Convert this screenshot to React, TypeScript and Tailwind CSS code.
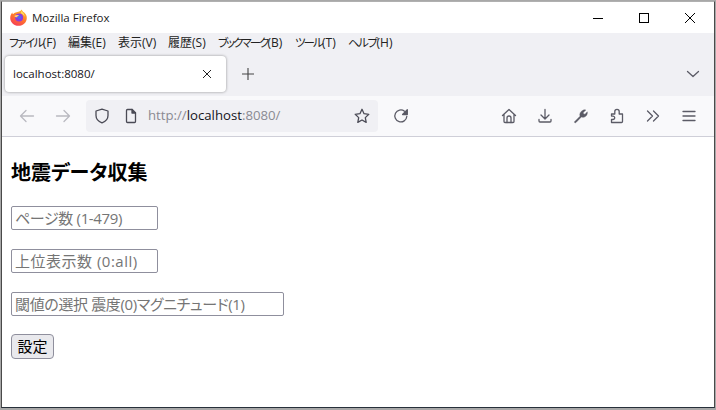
const UI_FONT = "font-['Open_Sans','Noto_Sans_CJK_JP',sans-serif]";

function Icon({ children, className = "" }: { children: React.ReactNode; className?: string }) {
  return (
    <svg
      viewBox="0 0 16 16"
      fill="none"
      stroke="currentColor"
      strokeWidth="1.3"
      strokeLinecap="round"
      strokeLinejoin="round"
      className={"h-4 w-4 shrink-0 " + className}
    >
      {children}
    </svg>
  );
}

function FirefoxLogo() {
  return (
    <svg viewBox="0 0 16 16" className="h-[17px] w-[17px] shrink-0">
      <defs>
        <linearGradient id="ffBody" x1="0.7" y1="0" x2="0.2" y2="1">
          <stop offset="0" stopColor="#ffc02e" />
          <stop offset="0.45" stopColor="#ff7a2b" />
          <stop offset="1" stopColor="#f5385a" />
        </linearGradient>
      </defs>
      <path
        d="M11 0.4c.5 1.6 1.2 2 2.4 3 1.6 1.500 2.400 3.100 2.400 5 0 4.200-3.400 7.400-7.800 7.400S.2 12.400.200 8.400C.2 6.400.9 4.600 2.200 3.200c0 .8.200 1.300.6 1.800.6-1 1.500-1.500 2.600-1.800C7.500 2.600 10 2.300 11 .4z"
        fill="url(#ffBody)"
      />
      <circle cx="8.600" cy="8" r="3.700" fill="#8a3be0" />
      <circle cx="8.800" cy="7.800" r="1.800" fill="#4f6af0" />
      <path d="M4 6.600c1.400-1 3.200-1.200 4.600-.6C7.200 6.300 6.700 7 6.800 7.800 5.600 8 4.600 7.500 4 6.600z" fill="#ffd76a" />
      <path d="M10.400 1.800c1.900 1.300 3.300 3.200 3.500 5.600-.8-1.600-2-2.800-3.700-3.400.4-.6.400-1.500.2-2.200z" fill="#ffe26b" />
    </svg>
  );
}

function ToolButton({ children, className = "" }: { children: React.ReactNode; className?: string }) {
  return <div className={"flex h-8 w-8 items-center justify-center " + className}>{children}</div>;
}

const MENU = [
  { name: "ファイル", key: "(F)", box: "w-[59px]", kana: "text-[11.500px] tracking-[-1.500px]" },
  { name: "編集", key: "(E)", box: "w-[50px]", kana: "" },
  { name: "表示", key: "(V)", box: "w-[50px]", kana: "" },
  { name: "履歴", key: "(S)", box: "w-[50px]", kana: "" },
  { name: "ブックマーク", key: "(B)", box: "w-[77px]", kana: "text-[11.500px] tracking-[-2px]" },
  { name: "ツール", key: "(T)", box: "w-[53px]", kana: "text-[11.500px] tracking-[-1.900px]" },
  { name: "ヘルプ", key: "(H)", box: "", kana: "text-[11.500px] tracking-[-1.500px]" },
];

const INPUT =
  "h-[24px] rounded-[2px] border border-[#8f8f9d] px-[3px] text-[15px] outline-none [font-feature-settings:'palt'] placeholder:text-[#757575]";

export default function App() {
  return (
    <div className="h-[410px] w-[716px] overflow-hidden border-t border-x border-b-2 border-[#a8a8a8] bg-white">
      <div className={"flex h-full flex-col border-t border-x border-b border-t-[#b0b0b0] border-x-[#4a4a4a] border-b-[#27303a] " + UI_FONT}>
        {/* title bar */}
        <div className="flex h-[31px] shrink-0 items-center bg-white pl-[8px] text-[11.500px] text-[#222]">
          <FirefoxLogo />
          <span className="ml-[5px]">Mozilla Firefox</span>
          <div className="ml-auto mr-px flex items-center text-black">
            <svg viewBox="0 0 46 30" className="h-[30px] w-[46px]" fill="none" stroke="currentColor">
              <path d="M18 15.500h10" />
            </svg>
            <svg viewBox="0 0 46 30" className="h-[30px] w-[46px]" fill="none" stroke="currentColor">
              <rect x="18.500" y="10.500" width="9" height="9" />
            </svg>
            <svg viewBox="0 0 46 30" className="h-[30px] w-[46px]" fill="none" stroke="currentColor">
              <path d="M18 10l10 10M28 10L18 20" />
            </svg>
          </div>
        </div>

        {/* menu + tabs */}
        <div className="h-[63px] shrink-0 bg-[#f0f0f4]">
          <div className="flex h-[20px] items-center pb-px pl-[7px] text-[12px] leading-none text-[#222] [font-feature-settings:'palt']">
            {MENU.map((m) => (
              <span key={m.key} className={"whitespace-nowrap " + m.box}>
                <span className={m.kana}>{m.name}</span>
                {m.key}
              </span>
            ))}
          </div>
          <div className="flex items-center pl-[3px] pt-[3px]">
            <div className="flex h-[36px] w-[221px] items-center rounded-[4px] bg-white pl-[8px] pr-[14px] text-[11.500px] text-[#15141a] shadow-[0_0_3px_rgba(0,0,0,0.4)]">
              <span>localhost:8080/</span>
              <svg viewBox="0 0 10 10" className="ml-auto h-[10px] w-[10px] text-[#222]" fill="none" stroke="currentColor">
                <path d="M1 1l8 8M9 1L1 9" />
              </svg>
            </div>
            <svg viewBox="0 0 14 14" className="ml-[15px] h-[14px] w-[14px] text-[#444]" fill="none" stroke="currentColor">
              <path d="M7 1v12M1 7h12" strokeWidth="1.100" />
            </svg>
            <Icon className="ml-auto mr-[13px] text-[#5b5b66]">
              <path d="M2.500 5.500L8 10.500l5.500-5" />
            </Icon>
          </div>
        </div>

        {/* nav bar */}
        <div className="flex h-[41px] shrink-0 items-center border-b border-[#cfcfd8] bg-[#f9f9fb] pb-px text-[#5b5b66]">
          <div className="flex items-center gap-[4px] pl-[9px] text-[#b9b9c0]">
            <ToolButton>
              <Icon>
                <path d="M14.500 8h-13M7 2.500L1.500 8 7 13.500" />
              </Icon>
            </ToolButton>
            <ToolButton>
              <Icon>
                <path d="M1.500 8h13M9 2.500L14.500 8 9 13.500" />
              </Icon>
            </ToolButton>
          </div>
          <div className="ml-[7px] flex h-[32px] w-[292px] items-center rounded-[4px] bg-[#f0f0f4] pl-[8px] pr-[8px]">
            <Icon className="text-[#4a4a55]">
              <path d="M8 1.200l6 1.800v4.500c0 3.500-2.500 6-6 7.300-3.500-1.300-6-3.800-6-7.300V3z" />
            </Icon>
            <Icon className="ml-[13px] text-[#4a4a55]">
              <path d="M3.500 2.500a1 1 0 0 1 1-1h4.700l3.300 3.300v8.700a1 1 0 0 1-1 1h-7a1 1 0 0 1-1-1z" />
              <path d="M9 1.500V5h3.500" fill="currentColor" />
            </Icon>
            <span className="ml-[9px] text-[13.200px] text-[#8a8a92]">
              http://<span className="text-[#15141a]">localhost</span>:8080/
            </span>
            <Icon className="ml-auto text-[#4a4a55]">
              <path d="M8 1.300l2.050 4.400 4.750.6-3.500 3.300.9 4.800L8 12l-4.200 2.400.9-4.800L1.200 6.300l4.750-.6z" />
            </Icon>
          </div>
          <Icon className="ml-[15px]">
            <path d="M13.800 8.500A6 6 0 1 1 11.500 3.200" />
            <path d="M14.300 1.800v4.700H9.600z" fill="currentColor" />
          </Icon>
          <div className="ml-auto flex items-center gap-[4px] pr-[9px]">
            <ToolButton>
              <Icon>
                <path d="M1.500 7.500L8 1.500l6.500 6M3 6.500v7a1 1 0 0 0 1 1h8a1 1 0 0 0 1-1v-7" />
                <path d="M6 14.500V10a2 2 0 0 1 4 0v4.500" />
              </Icon>
            </ToolButton>
            <ToolButton>
              <Icon>
                <path d="M8 1.500v9M4 7l4 4 4-4M2 11.500v1.500a1 1 0 0 0 1 1h10a1 1 0 0 0 1-1v-1.500" />
              </Icon>
            </ToolButton>
            <ToolButton>
              <Icon>
                <path
                  d="M1.500 13.700L7 8.200c-.7-2.300.2-4.700 3-6 1-.4 2-.4 2.800-.2L10.300 4.500l.2 1.400 1.500.3 2.300-2.400c.4 2.700-1 4.700-3 5.300-1 .3-2 .2-2.900-.2L3 14.500c-.5.400-1.200.3-1.500-.1z"
                  fill="currentColor"
                  strokeWidth="0.400"
                />
              </Icon>
            </ToolButton>
            <ToolButton>
              <Icon>
                <path d="M2.500 6h3.300V3.600a2.200 2.200 0 0 1 4.400 0V6h3.300v7.500a1 1 0 0 1-1 1H2.500v-3H4a1.700 1.700 0 0 0 0-3.400H2.500z" />
              </Icon>
            </ToolButton>
            <ToolButton>
              <Icon>
                <path d="M2.500 3l5 5-5 5M8.500 3l5 5-5 5" />
              </Icon>
            </ToolButton>
            <ToolButton>
              <Icon>
                <path d="M2 3.500h12M2 8h12M2 12.500h12" />
              </Icon>
            </ToolButton>
          </div>
        </div>

        {/* page */}
        <div className="flex min-h-0 flex-1 flex-col items-start bg-white pl-[9px] pt-[23px] font-['Open_Sans','Noto_Sans_CJK_JP',sans-serif] text-black">
          <h3 className="text-[20px] font-bold leading-[26px] [font-feature-settings:'palt']">地震データ収集</h3>
          <input placeholder="ページ数 (1-479)" className={"mt-[20px] w-[147px] tracking-[-0.35px] " + INPUT} />
          <input placeholder="上位表示数 (0:all)" className={"mt-[19px] w-[147px] tracking-[0.5px] " + INPUT} />
          <input placeholder="閾値の選択 震度(0)マグニチュード(1)" className={"mt-[19px] w-[273px] tracking-[-0.36px] " + INPUT} />
          <button className="mt-[18px] h-[25px] w-[43px] rounded-[4px] border border-[#8f8f9d] bg-[#e9e9ed] text-[15px] leading-none">
            設定
          </button>
        </div>
      </div>
    </div>
  );
}
